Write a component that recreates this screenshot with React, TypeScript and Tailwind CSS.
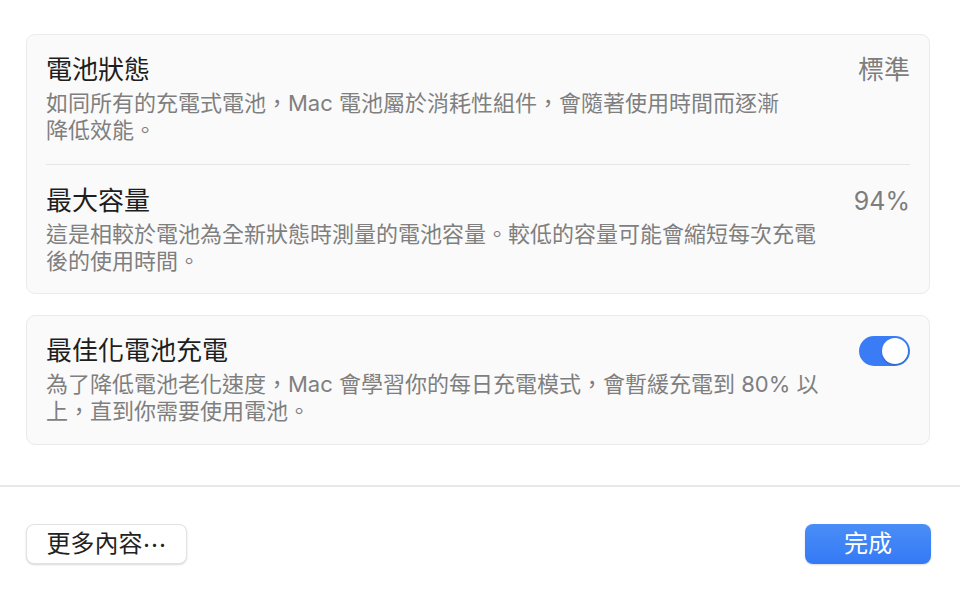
import React from 'react';

const font = { fontFamily: 'Inter, "Noto Sans CJK TC", sans-serif' };

interface RowProps {
  title: string;
  lines: string[];
  right: React.ReactNode;
}

const Row: React.FC<RowProps> = ({ title, lines, right }) => (
  <div className="flex items-start justify-between">
    <div>
      <div className="text-[26px] leading-[32px] font-normal text-[#1e1e1e]">{title}</div>
      <div className="mt-[4px] text-[22px] leading-[27px] text-[#7f7f7f]">
        {lines.map((l) => (
          <div key={l} className="whitespace-nowrap">{l}</div>
        ))}
      </div>
    </div>
    {right}
  </div>
);

const Toggle: React.FC = () => (
  <div className="mt-[1px] flex h-[30px] w-[51px] items-center justify-end rounded-full bg-[#3a7cf5] pr-[2px]">
    <div className="h-[26px] w-[26px] rounded-full bg-white shadow-[0_1px_2px_rgba(0,0,0,0.25)]" />
  </div>
);

export default function App() {
  return (
    <div className="flex h-[600px] w-[960px] flex-col bg-white" style={font}>
      <div className="flex flex-col gap-[21px] pl-[26px] pr-[30px] pt-[34px]">
        <div className="rounded-[9px] border border-[#ebebeb] bg-[#fafafa] px-[19px]">
          <div className="pt-[19px] pb-[20px]">
            <Row
              title="電池狀態"
              lines={['如同所有的充電式電池，Mac 電池屬於消耗性組件，會隨著使用時間而逐漸', '降低效能。']}
              right={<div className="text-[26px] leading-[32px] text-[#7d7d7d]">標準</div>}
            />
          </div>
          <div className="h-px bg-[#e6e6e6]" />
          <div className="pt-[20px] pb-[18px]">
            <Row
              title="最大容量"
              lines={['這是相較於電池為全新狀態時測量的電池容量。較低的容量可能會縮短每次充電', '後的使用時間。']}
              right={<div className="text-[25px] leading-[32px] text-[#7d7d7d]">94%</div>}
            />
          </div>
        </div>
        <div className="rounded-[9px] border border-[#ebebeb] bg-[#fafafa] px-[19px] pt-[19px] pb-[19px]">
          <Row
            title="最佳化電池充電"
            lines={['為了降低電池老化速度，Mac 會學習你的每日充電模式，會暫緩充電到 80% 以', '上，直到你需要使用電池。']}
            right={<Toggle />}
          />
        </div>
      </div>
      <div className="mt-[40px] h-[2px] bg-[#e8e8e8]" />
      <div className="flex items-center justify-between pl-[26px] pr-[29px] pt-[37px]">
        <button className="flex h-[40px] w-[161px] items-center justify-center rounded-[8px] border border-[#e2e2e2] bg-white text-[24px] text-[#222] shadow-[0_1px_2px_rgba(0,0,0,0.15)]">
          更多內容<span className="[font-family:'Noto_Sans_CJK_TC',sans-serif]">⋯</span>
        </button>
        <button className="flex h-[40px] w-[126px] items-center justify-center rounded-[8px] bg-gradient-to-b from-[#4a8ef7] to-[#3479f5] text-[24px] text-white shadow-[0_1px_2px_rgba(0,0,0,0.15)]">
          完成
        </button>
      </div>
    </div>
  );
}
